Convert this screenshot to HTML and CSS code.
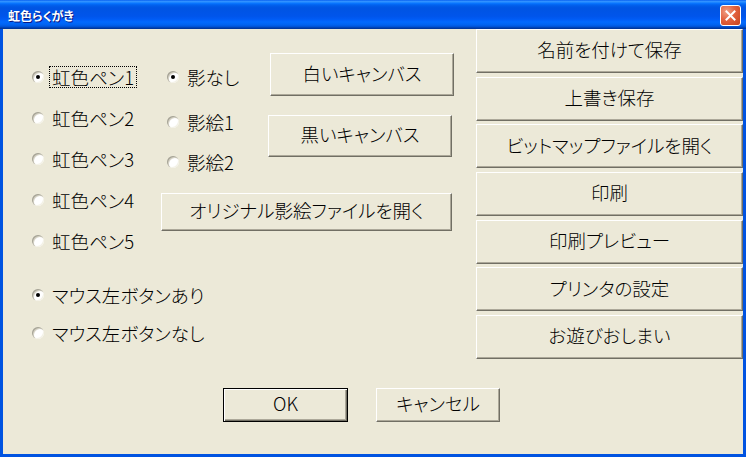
FILE: index.html
```html
<!doctype html>
<html lang="ja">
  <head>
    <meta charset="UTF-8" />
    <title>虹色らくがき</title>
    <link rel="stylesheet" href="styles.css">
  </head>
  <body>
    <div class="window">
      <div class="titlebar">
        <span class="title">虹色らくがき</span>
        <span class="close">
          <svg width="11" height="11" viewBox="0 0 11 11">
            <path d="M1.5 1.5 L9.5 9.5 M9.5 1.5 L1.5 9.5" stroke="#fff" stroke-width="2" stroke-linecap="square" fill="none" />
          </svg>
        </span>
      </div>
      <div class="client">
        <div class="main">
          <div class="left">
            <div class="top">
              <div class="pens">
                <label class="radio checked focus"><span class="mark"></span><span class="text">虹色ペン1</span></label>
                <label class="radio"><span class="mark"></span><span class="text">虹色ペン2</span></label>
                <label class="radio"><span class="mark"></span><span class="text">虹色ペン3</span></label>
                <label class="radio"><span class="mark"></span><span class="text">虹色ペン4</span></label>
                <label class="radio"><span class="mark"></span><span class="text">虹色ペン5</span></label>
              </div>
              <div class="shadow-area">
                <div class="shadow-row">
                  <div class="shadows">
                    <label class="radio checked"><span class="mark"></span><span class="text">影なし</span></label>
                    <label class="radio"><span class="mark"></span><span class="text">影絵1</span></label>
                    <label class="radio"><span class="mark"></span><span class="text">影絵2</span></label>
                  </div>
                  <div class="canvases">
                    <button class="btn btn-white">白いキャンバス</button>
                    <button class="btn btn-black">黒いキャンバス</button>
                  </div>
                </div>
                <button class="btn btn-original">オリジナル影絵ファイルを開く</button>
              </div>
            </div>
            <div class="mouse">
              <label class="radio checked"><span class="mark"></span><span class="text">マウス左ボタンあり</span></label>
              <label class="radio"><span class="mark"></span><span class="text">マウス左ボタンなし</span></label>
            </div>
          </div>
          <div class="right">
            <button class="btn">名前を付けて保存</button>
            <button class="btn">上書き保存</button>
            <button class="btn">ビットマップファイルを開く</button>
            <button class="btn">印刷</button>
            <button class="btn">印刷プレビュー</button>
            <button class="btn">プリンタの設定</button>
            <button class="btn">お遊びおしまい</button>
          </div>
        </div>
        <div class="footer">
          <button class="btn btn-default btn-ok">OK</button>
          <button class="btn btn-cancel">キャンセル</button>
        </div>
      </div>
    </div>
  </body>
</html>
```

FILE: styles.css
```css
* {
  box-sizing: border-box;
}
html,
body {
  margin: 0;
  padding: 0;
  overflow: hidden;
  background: #ece9d8;
}
.window {
  width: 746px;
  height: 457px;
  display: flex;
  flex-direction: column;
  background: #0053e1;
  padding: 0 3px 3px 3px;
  font-family: "Noto Sans CJK JP", sans-serif;
  font-feature-settings: "palt";
}

/* title bar */
.titlebar {
  height: 29px;
  margin: 0 -3px;
  padding: 0 5px 0 8px;
  display: flex;
  align-items: center;
  justify-content: space-between;
  background: linear-gradient(#0058ee 0%, #3593ff 4%, #288eff 7%, #127dff 10%, #036ffc 13%, #0262ee 17%, #0057e5 24%, #0054e3 30%, #0055eb 56%, #005bf5 66%, #026afe 76%, #0062ef 86%, #0052d6 92%, #0040ab 96%, #003092 100%);
}
.title {
  color: #fff;
  font-size: 12px;
  font-weight: bold;
  text-shadow: 1px 1px 0 #0a1883;
  line-height: 1;
  margin-top: 2px;
}
.close {
  width: 21px;
  height: 21px;
  margin-top: 2px;
  border: 1px solid #fff;
  border-radius: 3px;
  display: flex;
  align-items: center;
  justify-content: center;
  background: radial-gradient(circle at 30% 30%, #f0a085 0%, #e2623f 45%, #c6421b 100%);
}

/* client area */
.client {
  flex: 1;
  background: #ece9d8;
  display: flex;
  flex-direction: column;
}
.main {
  height: 330px;
  display: flex;
}
.left {
  width: 473px;
  padding: 24px 0 0 29px;
}
.top {
  display: flex;
}
.pens {
  width: 129px;
  padding-top: 3px;
}
.pens .radio {
  height: 41px;
}
.shadow-row {
  display: flex;
}
.shadows {
  width: 107px;
  padding: 4px 0 0 6px;
}
.shadows .radio {
  height: 40px;
}
.shadows .radio:first-child {
  margin-bottom: 5px;
}
.canvases {
  display: flex;
  flex-direction: column;
}
.mouse {
  margin-top: 15px;
}
.mouse .radio {
  height: 38px;
}

/* radio buttons */
.radio {
  display: flex;
  align-items: center;
  font-size: 18.5px;
  font-weight: 300;
  color: #000;
}
.mark {
  position: relative;
  width: 12px;
  height: 12px;
  flex: none;
  border-radius: 50%;
  background: #fff;
  box-shadow: inset 1px 1px 0 #a7a496, inset 2px 2px 0 #d6d3c6, inset -1px -1px 0 #f3f1e6;
}
.checked .mark::after {
  content: "";
  position: absolute;
  left: 4px;
  top: 4px;
  width: 4px;
  height: 4px;
  border-radius: 50%;
  background: #000;
}
.radio .text {
  margin-left: 5px;
  padding: 1px 2px;
  line-height: 18px;
  border: 1px dotted transparent;
}
.focus .text {
  border-color: #000;
}

/* push buttons */
.btn {
  font: 300 18.5px/1 "Noto Sans CJK JP", sans-serif;
  font-feature-settings: "palt";
  color: #000;
  background: #ece9d8;
  border: 1px solid;
  border-color: #fff #716f64 #716f64 #fff;
  box-shadow: inset -1px -1px 0 #aca899;
  padding: 0 0 3px 0;
  margin: 0;
}
.btn-white {
  width: 184px;
  height: 43px;
  margin-left: 2px;
}
.btn-black {
  width: 184px;
  height: 42px;
  margin-top: 19px;
}
.btn-original {
  width: 291px;
  height: 38px;
  margin-top: 11px;
}
.right {
  width: 267px;
  display: flex;
  flex-direction: column;
  gap: 3.67px;
}
.right .btn {
  height: 44px;
}
.footer {
  display: flex;
  margin-top: 29px;
  padding-left: 220px;
}
.btn-default {
  border: 1px solid #000;
  box-shadow: inset 1px 1px 0 #fff, inset -1px -1px 0 #716f64, inset -2px -2px 0 #aca899;
}
.btn-ok {
  width: 125px;
  height: 34px;
}
.btn-cancel {
  width: 124px;
  height: 34px;
  margin-left: 28px;
}
```
